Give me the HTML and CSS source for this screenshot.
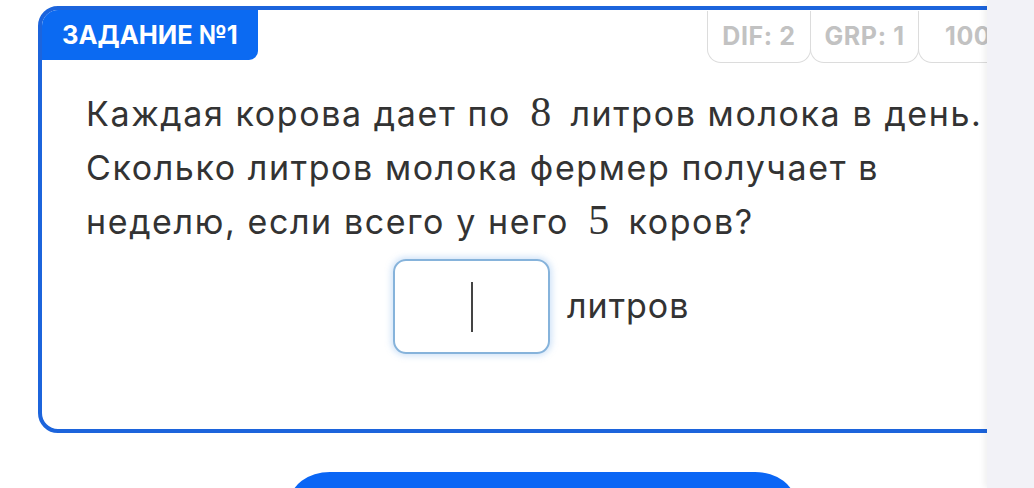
FILE: index.html
```html
<!DOCTYPE html>
<html lang="ru">
<head>
<meta charset="utf-8">
<link rel="stylesheet" href="styles.css">
</head>
<body>
<div class="page">
  <section class="card">
    <header class="card-head">
      <div class="tab">ЗАДАНИЕ №1</div>
      <div class="badges">
        <span class="badge">DIF: 2</span>
        <span class="badge">GRP: 1</span>
        <span class="badge">100</span>
      </div>
    </header>
    <p class="question">Каждая корова дает по <span class="math">8</span> литров молока в день. Сколько литров молока фермер получает в неделю, если всего у него <span class="math">5</span> коров?</p>
    <div class="answer">
      <div class="input"><span class="caret"></span></div>
      <span class="unit">литров</span>
    </div>
  </section>
  <div class="button-wrap"><button class="submit"></button></div>
  <aside class="side"></aside>
</div>
</body>
</html>
```
FILE: styles.css
```css
html, body {
  margin: 0;
  padding: 0;
  background: #ffffff;
  overflow: hidden;
}
.page {
  position: relative;
  width: 1034px;
  height: 488px;
  overflow: hidden;
  font-family: Inter, "Noto Sans", sans-serif;
}
.card {
  box-sizing: border-box;
  margin: 6px 0 0 38px;
  width: 1040px;
  height: 427px;
  border: 4px solid #1c64dc;
  border-radius: 20px;
  background: #fff;
  overflow: hidden;
}
.card-head {
  display: flex;
  justify-content: space-between;
  align-items: flex-start;
  width: 980px;
}
.tab {
  background: #0b6af2;
  color: #fff;
  font-weight: 700;
  font-size: 25.5px;
  height: 50px;
  line-height: 50px;
  padding: 0 18px 0 20px;
  width: 178px;
  border-bottom-right-radius: 9px;
  border-top-left-radius: 14px;
}
.badges {
  display: flex;
  margin-top: 1px;
}
.badge {
  box-sizing: border-box;
  height: 52px;
  line-height: 50px;
  border: 1.5px solid #dcdcdc;
  border-top: none;
  border-radius: 0 0 14px 14px;
  color: #c2c2c2;
  font-weight: 700;
  font-size: 25px;
  letter-spacing: 0.6px;
  text-align: center;
  width: 104px;
  margin-left: -1px;
}
.badge:nth-child(2) { width: 109px; }
.badge:nth-child(3) { width: 104px; text-align: left; padding-left: 26px; }
.question {
  margin: 24px 0 0 44px;
  width: 905px;
  font-size: 34px;
  line-height: 54px;
  color: #333333;
  letter-spacing: 1.6px;
}
.math {
  font-family: "Liberation Serif", "DejaVu Serif", serif;
  font-size: 42px;
  line-height: 0;
  letter-spacing: 0;
  padding: 0 8px;
}
.answer {
  display: flex;
  align-items: center;
  gap: 17px;
  margin: 10px 0 0 351px;
}
.input {
  box-sizing: border-box;
  width: 157px;
  height: 95px;
  border: 2px solid #86b3db;
  border-radius: 13px;
  box-shadow: 0 0 6px 2px rgba(120, 175, 235, 0.35);
  display: flex;
  align-items: center;
  justify-content: center;
}
.caret {
  display: block;
  width: 2px;
  height: 50px;
  background: #444;
}
.unit {
  font-size: 34px;
  letter-spacing: 1px;
  color: #333333;
  margin-bottom: 2px;
}
.button-wrap {
  display: flex;
  margin: 39px 0 0 290px;
}
.submit {
  width: 505px;
  height: 60px;
  border: none;
  background: #0a66f5;
  border-radius: 40px / 30px;
}
.side {
  position: absolute;
  top: 0;
  right: 0;
  width: 47px;
  height: 488px;
  background: #f2f2f7;
  box-shadow: -3px 0 6px rgba(0, 0, 0, 0.06);
}
```
